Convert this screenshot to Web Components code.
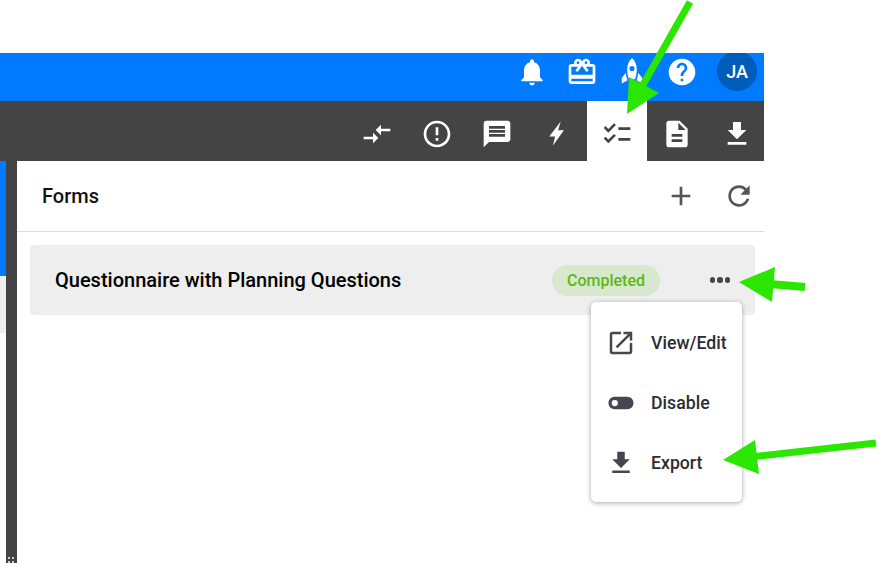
<!DOCTYPE html>
<html>
<head>
<meta charset="utf-8">
<style>
  html, body { margin:0; height:563px; overflow:hidden; background:#fff; font-family:Roboto,"Liberation Sans",sans-serif; }
  app-shell { width:877px; height:563px; }
</style>
</head>
<body>
<script>
// material style icon paths, all on a 24 box
const ICONS = {
  bell: "M12 22c1.1 0 2-.9 2-2h-4c0 1.1.89 2 2 2zm6-6v-5c0-3.07-1.64-5.64-4.5-6.32V4c0-.83-.67-1.5-1.5-1.5s-1.5.67-1.5 1.5v.68C7.63 5.36 6 7.92 6 11v5l-2 2v1h16v-1l-2-2z",
  gift: "M20 6h-2.18c.11-.31.18-.65.18-1 0-1.66-1.34-3-3-3-1.05 0-1.96.54-2.5 1.35l-.5.67-.5-.68C10.96 2.54 10.05 2 9 2 7.34 2 6 3.34 6 5c0 .35.07.69.18 1H4c-1.11 0-1.99.89-1.99 2L2 19c0 1.11.89 2 2 2h16c1.11 0 2-.89 2-2V8c0-1.11-.89-2-2-2zm-5-2c.55 0 1 .45 1 1s-.45 1-1 1-1-.45-1-1 .45-1 1-1zM9 4c.55 0 1 .45 1 1s-.45 1-1 1-1-.45-1-1 .45-1 1-1zm11 15H4v-2h16v2zm0-5H4V8h5.08L7 10.83 8.62 12 11 8.76l1-1.36 1 1.36L15.38 12 17 10.83 14.92 8H20v6z",
  rocket: "M12 1.500c-2.600 2.200-3.600 5.600-3.600 8.700 0 2.800.6 5.200 1.300 7.300h4.600c.7-2.100 1.300-4.500 1.300-7.300C15.600 7.100 14.600 3.700 12 1.500zm0 6a1.900 1.900 0 1 1 0 3.800 1.900 1.900 0 0 1 0-3.800zM7.300 12.500 4.300 16.500V20.600L8.600 18.200c-.6-1.700-1.100-3.600-1.300-5.700zM16.700 12.500c-.2 2.100-.7 4-1.300 5.700l4.300 2.400V16.500l-3-4z",
  help: "M12 2C6.48 2 2 6.48 2 12s4.48 10 10 10 10-4.48 10-10S17.52 2 12 2zm1 17h-2v-2h2v2zm2.07-7.750l-.9.92C13.450 12.900 13 13.500 13 15h-2v-.5c0-1.100.45-2.100 1.170-2.830l1.240-1.260c.37-.36.59-.86.59-1.410 0-1.100-.9-2-2-2s-2 .9-2 2H8c0-2.210 1.790-4 4-4s4 1.790 4 4c0 .88-.36 1.680-.93 2.250z",
  compare: "M9.010 14H2v2h7.010v3L13 15l-3.990-4v3zm5.980-1v-3H22V8h-7.010V5L11 9l3.990 4z",
  alert: "M11 15h2v2h-2zm0-8h2v6h-2zm.99-5C6.470 2 2 6.480 2 12s4.470 10 9.990 10C17.520 22 22 17.520 22 12S17.520 2 11.990 2zM12 20c-4.420 0-8-3.580-8-8s3.580-8 8-8 8 3.580 8 8-3.580 8-8 8z",
  message: "M20 2H4c-1.100 0-1.990.9-1.990 2L2 22l4-4h14c1.100 0 2-.9 2-2V4c0-1.100-.9-2-2-2zm-2 12H6v-2h12v2zm0-3H6V9h12v2zm0-3H6V6h12v2z",
  bolt: "M14.800 2.700 6.200 13.800H10.600L9 20.600 17.200 9.200H12.800z",
  checklist: "M22 7h-9v2h9V7zm0 8h-9v2h9v-2zM5.540 11 2 7.460l1.410-1.410 2.120 2.120 4.240-4.240 1.410 1.410L5.540 11zm0 8L2 15.460l1.410-1.410 2.120 2.120 4.240-4.240 1.410 1.410L5.540 19z",
  doc: "M14 2H6c-1.100 0-1.990.9-1.990 2L4 20c0 1.100.89 2 1.990 2H18c1.100 0 2-.9 2-2V8l-6-6zm2 16H8v-2h8v2zm0-4H8v-2h8v2zm-3-5V3.500L18.500 9H13z",
  download: "M19 9h-4V3H9v6H5l7 7 7-7zM5 18v2h14v-2H5z",
  plus: "M19 13h-6v6h-2v-6H5v-2h6V5h2v6h6v2z",
  refresh: "M17.650 6.350C16.200 4.900 14.210 4 12 4c-4.420 0-7.990 3.580-7.990 8s3.570 8 7.990 8c3.730 0 6.840-2.550 7.730-6h-2.080c-.82 2.330-3.040 4-5.650 4-3.310 0-6-2.690-6-6s2.690-6 6-6c1.660 0 3.140.69 4.220 1.780L13 11h7V4l-2.350 2.350z",
  launch: "M19 19H5V5h7V3H5c-1.110 0-2 .9-2 2v14c0 1.100.89 2 2 2h14c1.100 0 2-.9 2-2v-7h-2v7zM14 3v2h3.590l-9.830 9.830 1.410 1.410L19 6.410V10h2V3h-7z",
  toggle: "M17 7H7c-2.760 0-5 2.240-5 5s2.240 5 5 5h10c2.760 0 5-2.240 5-5s-2.240-5-5-5zM7 14.500a2.500 2.500 0 1 1 0-5 2.500 2.500 0 0 1 0 5z"
};

class AppIcon extends HTMLElement {
  connectedCallback() {
    const size = this.getAttribute("size") || 32;
    const d = ICONS[this.getAttribute("name")] || "";
    this.attachShadow({ mode: "open" }).innerHTML = `
      <style>
        :host { display:inline-flex; width:${size}px; height:${size}px; flex:none; }
        svg { width:100%; height:100%; fill:currentColor; display:block; }
      </style>
      <svg viewBox="0 0 24 24"><path d="${d}" fill-rule="evenodd"/></svg>`;
  }
}
customElements.define("app-icon", AppIcon);

class AppTopbar extends HTMLElement {
  constructor() {
    super();
    this.attachShadow({ mode: "open" }).innerHTML = `
      <style>
        :host { display:flex; height:48px; background:#007bff; color:#fff; justify-content:flex-end; align-items:center; padding:0 7px 10px 0; box-sizing:border-box; overflow:hidden; }
        .btn { width:50px; display:flex; justify-content:center; }
        .avatar { width:40px; height:40px; border-radius:50%; background:#005cb9; margin:0 0 2px 10px; display:flex; align-items:center; justify-content:center; font-size:18px; font-weight:500; flex:none; }
      </style>
      <div class="btn"><app-icon name="bell"></app-icon></div>
      <div class="btn"><app-icon name="gift"></app-icon></div>
      <div class="btn"><app-icon name="rocket"></app-icon></div>
      <div class="btn"><app-icon name="help"></app-icon></div>
      <div class="avatar">JA</div>`;
  }
}
customElements.define("app-topbar", AppTopbar);

class AppTabbar extends HTMLElement {
  constructor() {
    super();
    const tabs = ["compare", "alert", "message", "bolt", "checklist", "doc", "download"];
    const active = "checklist";
    this.attachShadow({ mode: "open" }).innerHTML = `
      <style>
        :host { display:flex; height:60px; background:#444; color:#fff; justify-content:flex-end; overflow:hidden; }
        .tab { width:60px; flex:none; display:flex; align-items:center; justify-content:center; padding-top:6px; box-sizing:border-box; }
        .tab:last-child { margin-right:-3px; }
        .tab.on { background:#fff; color:#444; }
      </style>
      ${tabs.map((t) => `<div class="tab ${t === active ? "on" : ""}"><app-icon name="${t}"></app-icon></div>`).join("")}`;
  }
}
customElements.define("app-tabbar", AppTabbar);

class StatusChip extends HTMLElement {
  constructor() {
    super();
    this.attachShadow({ mode: "open" }).innerHTML = `
      <style>
        :host { display:inline-flex; align-items:center; height:31px; padding:0 15px; border-radius:16px; background:#d7e8cf; color:#5cb811; font-size:16px; font-weight:500; }
      </style>
      <slot></slot>`;
  }
}
customElements.define("status-chip", StatusChip);

class MenuItem extends HTMLElement {
  connectedCallback() {
    this.attachShadow({ mode: "open" }).innerHTML = `
      <style>
        :host { display:flex; align-items:center; height:60px; padding-left:15px; gap:15px; color:#45464f; }
        span { color:#2c2d33; font-weight:500; font-size:17.700px; }
      </style>
      <app-icon name="${this.getAttribute("icon")}" size="30"></app-icon>
      <span><slot></slot></span>`;
  }
}
customElements.define("menu-item", MenuItem);

class PopupMenu extends HTMLElement {
  constructor() {
    super();
    this.attachShadow({ mode: "open" }).innerHTML = `
      <style>
        :host { position:absolute; left:574px; top:141px; width:151px; height:200px; padding:11px 0 0; box-sizing:border-box; background:#fff; border-radius:5px; box-shadow:0 1px 5px rgba(0,0,0,.35); }
      </style>
      <slot></slot>`;
  }
}
customElements.define("popup-menu", PopupMenu);

class FormCard extends HTMLElement {
  constructor() {
    super();
    this.attachShadow({ mode: "open" }).innerHTML = `
      <style>
        :host { display:flex; align-items:center; height:70px; margin:13px 9px 0 13px; padding:0 25px; background:#eee; border-radius:4px; }
        .name { flex:1; font-size:20px; font-weight:500; color:#000; }
        .dots { display:flex; gap:2px; margin-left:49.500px; }
        .dots i { width:5.500px; height:5.500px; border-radius:50%; background:#45464f; }
      </style>
      <div class="name"><slot name="title"></slot></div>
      <slot name="status"></slot>
      <div class="dots"><i></i><i></i><i></i></div>`;
  }
}
customElements.define("form-card", FormCard);

class FormsPanel extends HTMLElement {
  constructor() {
    super();
    this.attachShadow({ mode: "open" }).innerHTML = `
      <style>
        :host { display:block; flex:1; position:relative; }
        header { display:flex; align-items:center; height:70px; border-bottom:1px solid #ddd; padding:0 9px 0 25px; color:#555; }
        h2 { flex:1; margin:0; font-size:20px; font-weight:500; color:#111; }
        header app-icon + app-icon { margin-left:26px; }
      </style>
      <header>
        <h2>Forms</h2>
        <app-icon name="plus"></app-icon>
        <app-icon name="refresh"></app-icon>
      </header>
      <slot></slot>`;
  }
}
customElements.define("forms-panel", FormsPanel);

class SideStrip extends HTMLElement {
  constructor() {
    super();
    this.attachShadow({ mode: "open" }).innerHTML = `
      <style>
        :host { display:flex; width:17px; flex:none; position:relative; }
        .col { width:6px; display:flex; flex-direction:column; }
        .blue { height:115px; background:#007bff; }
        .grey { height:57px; background:#eee; }
        .bar { flex:1; background:#444; }
        .grip { position:absolute; left:8px; bottom:0; width:6px; display:grid; grid-template-columns:2px 2px; gap:2px; }
        .grip i { height:2px; background:#ccc; }
      </style>
      <div class="col"><div class="blue"></div><div class="grey"></div></div>
      <div class="bar"></div>
      <div class="grip"><i></i><i></i><i></i><i></i></div>`;
  }
}
customElements.define("side-strip", SideStrip);

// green callout arrows drawn over the screenshot
class CalloutArrows extends HTMLElement {
  constructor() {
    super();
    this.attachShadow({ mode: "open" }).innerHTML = `
      <style>
        :host { position:absolute; left:0; top:0; width:877px; height:563px; pointer-events:none; }
        svg { display:block; }
      </style>
      <svg width="877" height="563" fill="#2ae600" stroke="none">
        <polygon points="627,114 629,77 659,93"/>
        <line x1="690" y1="2" x2="640" y2="90" stroke="#2ae600" stroke-width="7"/>
        <polygon points="739,282 775,267 772,302"/>
        <line x1="770" y1="284" x2="805" y2="287" stroke="#2ae600" stroke-width="8"/>
        <polygon points="723,460 755,440 759,474"/>
        <line x1="750" y1="457" x2="876" y2="443" stroke="#2ae600" stroke-width="7"/>
      </svg>`;
  }
}
customElements.define("callout-arrows", CalloutArrows);

class AppShell extends HTMLElement {
  constructor() {
    super();
    this.attachShadow({ mode: "open" }).innerHTML = `
      <style>
        :host { display:block; position:relative; padding-top:53px; box-sizing:border-box; overflow:hidden; }
        .app { width:764px; height:510px; display:flex; flex-direction:column; }
        .body { flex:1; display:flex; min-height:0; }
      </style>
      <div class="app">
        <app-topbar></app-topbar>
        <app-tabbar></app-tabbar>
        <div class="body">
          <side-strip></side-strip>
          <slot></slot>
        </div>
      </div>
      <callout-arrows></callout-arrows>`;
  }
}
customElements.define("app-shell", AppShell);
</script>

<app-shell>
  <forms-panel>
    <form-card>
      <span slot="title">Questionnaire with Planning Questions</span>
      <status-chip slot="status">Completed</status-chip>
    </form-card>
    <popup-menu>
      <menu-item icon="launch">View/Edit</menu-item>
      <menu-item icon="toggle">Disable</menu-item>
      <menu-item icon="download">Export</menu-item>
    </popup-menu>
  </forms-panel>
</app-shell>
</body>
</html>
